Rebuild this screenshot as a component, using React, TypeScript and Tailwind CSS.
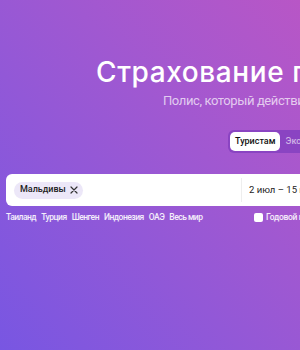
import React from "react";

export default function App() {
  const links = ["Таиланд", "Турция", "Шенген", "Индонезия", "ОАЭ", "Весь мир"];
  return (
    <div className="w-[300px] h-[350px] overflow-hidden bg-gradient-to-tr from-[#7856e2] to-[#b856c6]" style={{ fontFamily: "Roboto, 'Noto Sans', sans-serif" }}>
      <div className="w-[700px]">
        <div className="pt-[56px] pl-[96px] whitespace-nowrap text-white text-[28px] leading-[32px] font-medium tracking-[0.6px]" style={{ fontFamily: "Inter, 'Noto Sans', sans-serif" }}>
          Страхование путешественников
        </div>
        <div className="mt-[5px] pl-[163px] whitespace-nowrap text-[13px] leading-[16px] tracking-[-0.4px] text-white/70">
          Полис, который действительно работает
        </div>
        <div className="mt-[21px] pl-[228px] flex">
          <div className="flex items-center rounded-md bg-[#8a44c2] p-[2px]">
            <div className="h-[19px] px-[5px] rounded-[5px] bg-white text-[9px] font-medium text-[#111] flex items-center">
              Туристам
            </div>
            <div className="h-[19px] px-[5px] text-[9px] font-medium text-white/60 flex items-center">
              Экспатам
            </div>
          </div>
        </div>
        <div className="mt-[21px] ml-[6px] h-[32px] w-[600px] bg-white rounded-l-md flex items-center">
          <div className="w-[235px] pl-[8px] flex items-center">
            <div className="h-[17px] rounded-full bg-[#ece7f8] pl-[6px] pr-[5px] flex items-center gap-[4px] text-[9px] font-medium text-[#222]">
              Мальдивы
              <svg width="8" height="8" viewBox="0 0 8 8" fill="none" stroke="#333" strokeWidth="1.2" strokeLinecap="round"><path d="M1 1L7 7M7 1L1 7" /></svg>
            </div>
          </div>
          <div className="w-px h-[24px] bg-[#eee]" />
          <div className="pl-[7px] text-[9.5px] text-[#222] whitespace-nowrap">2 июл – 15 июл</div>
        </div>
        <div className="mt-[5px] pl-[6px] flex items-center whitespace-nowrap">
          <div className="w-[248px] flex gap-[5px] text-[8.5px] tracking-[-0.5px] font-medium text-white/90">
            {links.map((l) => (
              <span key={l}>{l}</span>
            ))}
          </div>
          <div className="w-[9px] h-[9px] rounded-[2px] bg-white" />
          <span className="ml-[3px] text-[8.5px] tracking-[-0.3px] font-medium text-white/90">Годовой полис</span>
        </div>
      </div>
    </div>
  );
}
